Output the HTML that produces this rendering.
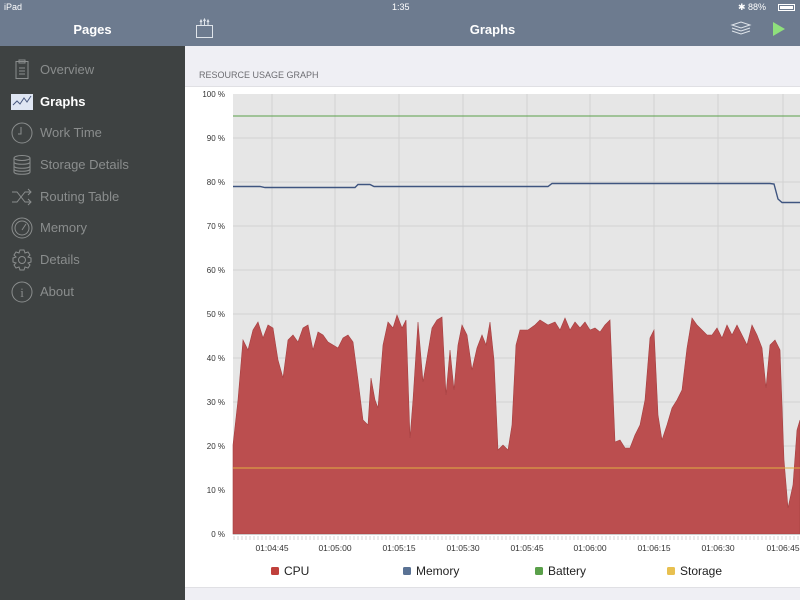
<!DOCTYPE html>
<html><head><meta charset="utf-8"><style>
*{margin:0;padding:0;box-sizing:border-box}
body{width:800px;height:600px;overflow:hidden;font-family:"Liberation Sans",sans-serif;background:#efeff4;position:relative}
.top{position:absolute;left:0;top:0;width:800px;height:46px;background:#6d7b8f}
.sb{position:absolute;left:0;top:46px;width:185px;height:554px;background:#3e4242}
.item{position:absolute;left:40px;font-size:13px;color:#8a8d8d}
.ic{position:absolute;left:11px;width:22px;height:22px}
</style></head><body>
<div class="top"></div>
<div style="position:absolute;left:4px;top:2px;font-size:9px;color:#fff">iPad</div>
<div style="position:absolute;left:392px;top:2px;font-size:9px;color:#fff">1:35</div>
<div style="position:absolute;left:738px;top:2px;font-size:9px;color:#fff">✱ 88%</div>
<div style="position:absolute;left:778px;top:4px;width:17px;height:7px;border:1px solid #fff;padding:1px"><div style="background:#fff;width:100%;height:100%"></div></div>
<div style="position:absolute;left:0;top:22px;width:185px;text-align:center;color:#fff;font-weight:bold;font-size:13px">Pages</div>
<div style="position:absolute;left:185px;top:22px;width:615px;text-align:center;color:#fff;font-weight:bold;font-size:13px">Graphs</div>
<svg style="position:absolute;left:195px;top:18px" width="20" height="22"><g fill="none" stroke="#dfe4ea" stroke-width="1"><rect x="1.5" y="7.5" width="16" height="12"/><path d="M6 7V3M9.5 7V2M13 7V3M5 4l1-2 1 2M8.5 3l1-2 1 2M12 4l1-2 1 2"/></g></svg>
<svg style="position:absolute;left:730px;top:21px" width="22" height="16"><g fill="none" stroke="#dfe4ea"><path d="M2 4l9-3 9 3-9 3z M2 7l9 3 9-3 M2 10l9 3 9-3"/></g></svg>
<svg style="position:absolute;left:772px;top:22px" width="14" height="14"><path d="M1 0L13 7L1 14z" fill="#8fe07c"/></svg>
<div class="sb"></div>
<svg class="ic" style="top:59px" viewBox="0 0 22 22"><g fill="none" stroke="#8a8d8d"><rect x="5" y="2.5" width="12" height="17"/><rect x="8" y="1" width="6" height="3"/><path d="M8 9h6M8 12h6M8 15h6"/></g></svg>
<div class="item" style="top:62px">Overview</div>
<svg class="ic" style="top:91px" viewBox="0 0 22 22"><rect x="0" y="3" width="22" height="16" fill="#dfe6f3"/><path d="M2 14l4-4 3 3 4-6 3 4 4-6" fill="none" stroke="#4a5a80"/></svg>
<div class="item" style="top:94px;color:#fff;font-weight:bold">Graphs</div>
<svg class="ic" style="top:122px" viewBox="0 0 22 22"><g fill="none" stroke="#8a8d8d"><circle cx="11" cy="11" r="10"/><path d="M10 5v7H7"/></g></svg>
<div class="item" style="top:125px">Work Time</div>
<svg class="ic" style="top:154px" viewBox="0 0 22 22"><g fill="none" stroke="#8a8d8d"><ellipse cx="11" cy="4" rx="8" ry="2.5"/><path d="M3 4v14c0 3 16 3 16 0V4M3 8c0 3 16 3 16 0M3 12c0 3 16 3 16 0M3 15c0 3 16 3 16 0"/></g></svg>
<div class="item" style="top:157px">Storage Details</div>
<svg class="ic" style="top:186px" viewBox="0 0 22 22"><g fill="none" stroke="#8a8d8d"><path d="M1 6h5l8 10h6M1 16h5l8-10h6M17 3l3 3-3 3M17 13l3 3-3 3"/></g></svg>
<div class="item" style="top:189px">Routing Table</div>
<svg class="ic" style="top:217px" viewBox="0 0 22 22"><g fill="none" stroke="#8a8d8d"><circle cx="11" cy="11" r="10"/><circle cx="11" cy="11" r="7"/><path d="M11 13l4-6"/></g></svg>
<div class="item" style="top:220px">Memory</div>
<svg class="ic" style="top:249px" viewBox="0 0 22 22"><g fill="none" stroke="#8a8d8d"><path d="M9 1h4l1 3 3-1 2 3-2 2 3 1v4l-3 1 2 2-2 3-3-1-1 3H9l-1-3-3 1-2-3 2-2-3-1V9l3-1-2-2 2-3 3 1z"/><circle cx="11" cy="11" r="3.5"/></g></svg>
<div class="item" style="top:252px">Details</div>
<svg class="ic" style="top:281px" viewBox="0 0 22 22"><g fill="none" stroke="#8a8d8d"><circle cx="11" cy="11" r="10"/></g><text x="11" y="16" font-size="13" text-anchor="middle" fill="#8a8d8d" font-family="Liberation Serif">i</text></svg>
<div class="item" style="top:284px">About</div>
<div style="position:absolute;left:199px;top:70px;font-size:9px;color:#6d6d72">RESOURCE USAGE GRAPH</div>
<div style="position:absolute;left:185px;top:86px;width:615px;height:502px;background:#fff;border-top:1px solid #e0e0e4;border-bottom:1px solid #e0e0e4"></div>
<svg style="position:absolute;left:0;top:0" width="800" height="600">
<rect x="233" y="94" width="567" height="440" fill="#e6e6e6"/>
<g stroke="#d2d2d2" stroke-width="1">
<path d="M272 94V534M335 94V534M399 94V534M463 94V534M527 94V534M590 94V534M654 94V534M718 94V534M783 94V534"/>
<path d="M233 138H800M233 182H800M233 226H800M233 270H800M233 314H800M233 358H800M233 402H800M233 446H800M233 490H800"/>
</g>
<polygon fill="#bb4e4f" stroke="#a53f40" stroke-width="0.6" points="233,534 233,445 238,400 243,340 248,350 253,330 258,322 263,338 268,325 273,328 278,360 283,378 288,340 293,335 298,342 303,328 308,325 313,350 318,332 323,335 328,342 333,345 338,348 343,338 348,335 353,342 358,380 363,420 368,425 371,378 375,400 378,408 383,345 388,322 393,328 397,315 402,328 406,320 410,438 413,400 418,322 423,382 427,358 432,328 437,320 442,317 446,395 450,350 454,390 458,345 462,325 467,335 472,370 477,348 482,335 486,345 490,322 494,360 498,450 503,445 508,450 512,425 516,345 520,330 528,330 535,325 540,320 548,325 555,322 560,330 565,318 570,330 575,322 580,328 585,322 590,330 595,328 600,332 605,325 610,320 615,442 620,440 625,448 630,448 635,435 640,425 645,400 650,338 654,330 658,415 662,440 667,425 672,408 677,400 682,390 687,348 692,318 697,325 702,330 707,335 712,335 717,328 722,338 727,325 732,335 737,325 742,335 747,345 752,325 757,335 762,348 766,388 770,345 775,340 780,350 784,460 788,508 793,485 797,430 800,420 800,534"/>
<path d="M233 116H800" stroke="#5aa04a" stroke-width="1"/>
<path d="M233 468H800" stroke="#e0b040" stroke-width="1"/>
<path d="M233 186.5H260L265 187.5H355L358 184.5H370L374 186.5H548L552 183.5H770L774 184L778 199L782 202.5H800" fill="none" stroke="#3f5580" stroke-width="1.4"/>
<path d="M233 534.5H800" stroke="#ccc"/>
<path d="M234 536V540M238 536V540M242 536V540M246 536V540M250 536V540M254 536V540M258 536V540M262 536V540M266 536V540M270 536V540M274 536V540M278 536V540M282 536V540M286 536V540M290 536V540M294 536V540M298 536V540M302 536V540M306 536V540M310 536V540M314 536V540M318 536V540M322 536V540M326 536V540M330 536V540M334 536V540M338 536V540M342 536V540M346 536V540M350 536V540M354 536V540M358 536V540M362 536V540M366 536V540M370 536V540M374 536V540M378 536V540M382 536V540M386 536V540M390 536V540M394 536V540M398 536V540M402 536V540M406 536V540M410 536V540M414 536V540M418 536V540M422 536V540M426 536V540M430 536V540M434 536V540M438 536V540M442 536V540M446 536V540M450 536V540M454 536V540M458 536V540M462 536V540M466 536V540M470 536V540M474 536V540M478 536V540M482 536V540M486 536V540M490 536V540M494 536V540M498 536V540M502 536V540M506 536V540M510 536V540M514 536V540M518 536V540M522 536V540M526 536V540M530 536V540M534 536V540M538 536V540M542 536V540M546 536V540M550 536V540M554 536V540M558 536V540M562 536V540M566 536V540M570 536V540M574 536V540M578 536V540M582 536V540M586 536V540M590 536V540M594 536V540M598 536V540M602 536V540M606 536V540M610 536V540M614 536V540M618 536V540M622 536V540M626 536V540M630 536V540M634 536V540M638 536V540M642 536V540M646 536V540M650 536V540M654 536V540M658 536V540M662 536V540M666 536V540M670 536V540M674 536V540M678 536V540M682 536V540M686 536V540M690 536V540M694 536V540M698 536V540M702 536V540M706 536V540M710 536V540M714 536V540M718 536V540M722 536V540M726 536V540M730 536V540M734 536V540M738 536V540M742 536V540M746 536V540M750 536V540M754 536V540M758 536V540M762 536V540M766 536V540M770 536V540M774 536V540M778 536V540M782 536V540M786 536V540M790 536V540M794 536V540M798 536V540" stroke="#bbb" stroke-width="0.6"/>
<g font-size="8" fill="#333" text-anchor="end" font-family="Liberation Sans">
<text x="225" y="97">100 %</text><text x="225" y="141">90 %</text><text x="225" y="185">80 %</text><text x="225" y="229">70 %</text><text x="225" y="273">60 %</text><text x="225" y="317">50 %</text><text x="225" y="361">40 %</text><text x="225" y="405">30 %</text><text x="225" y="449">20 %</text><text x="225" y="493">10 %</text><text x="225" y="537">0 %</text>
</g>
<g font-size="8.5" fill="#333" text-anchor="middle" font-family="Liberation Sans">
<text x="272" y="551">01:04:45</text><text x="335" y="551">01:05:00</text><text x="399" y="551">01:05:15</text><text x="463" y="551">01:05:30</text><text x="527" y="551">01:05:45</text><text x="590" y="551">01:06:00</text><text x="654" y="551">01:06:15</text><text x="718" y="551">01:06:30</text><text x="783" y="551">01:06:45</text>
</g>
<g font-size="12" fill="#222" font-family="Liberation Sans">
<rect x="271" y="567" width="8" height="8" rx="1.5" fill="#c0403c"/><text x="284" y="575">CPU</text>
<rect x="403" y="567" width="8" height="8" rx="1.5" fill="#5a7294"/><text x="416" y="575">Memory</text>
<rect x="535" y="567" width="8" height="8" rx="1.5" fill="#5aa04a"/><text x="548" y="575">Battery</text>
<rect x="667" y="567" width="8" height="8" rx="1.5" fill="#e8c050"/><text x="680" y="575">Storage</text>
</g>
</svg>
</body></html>
